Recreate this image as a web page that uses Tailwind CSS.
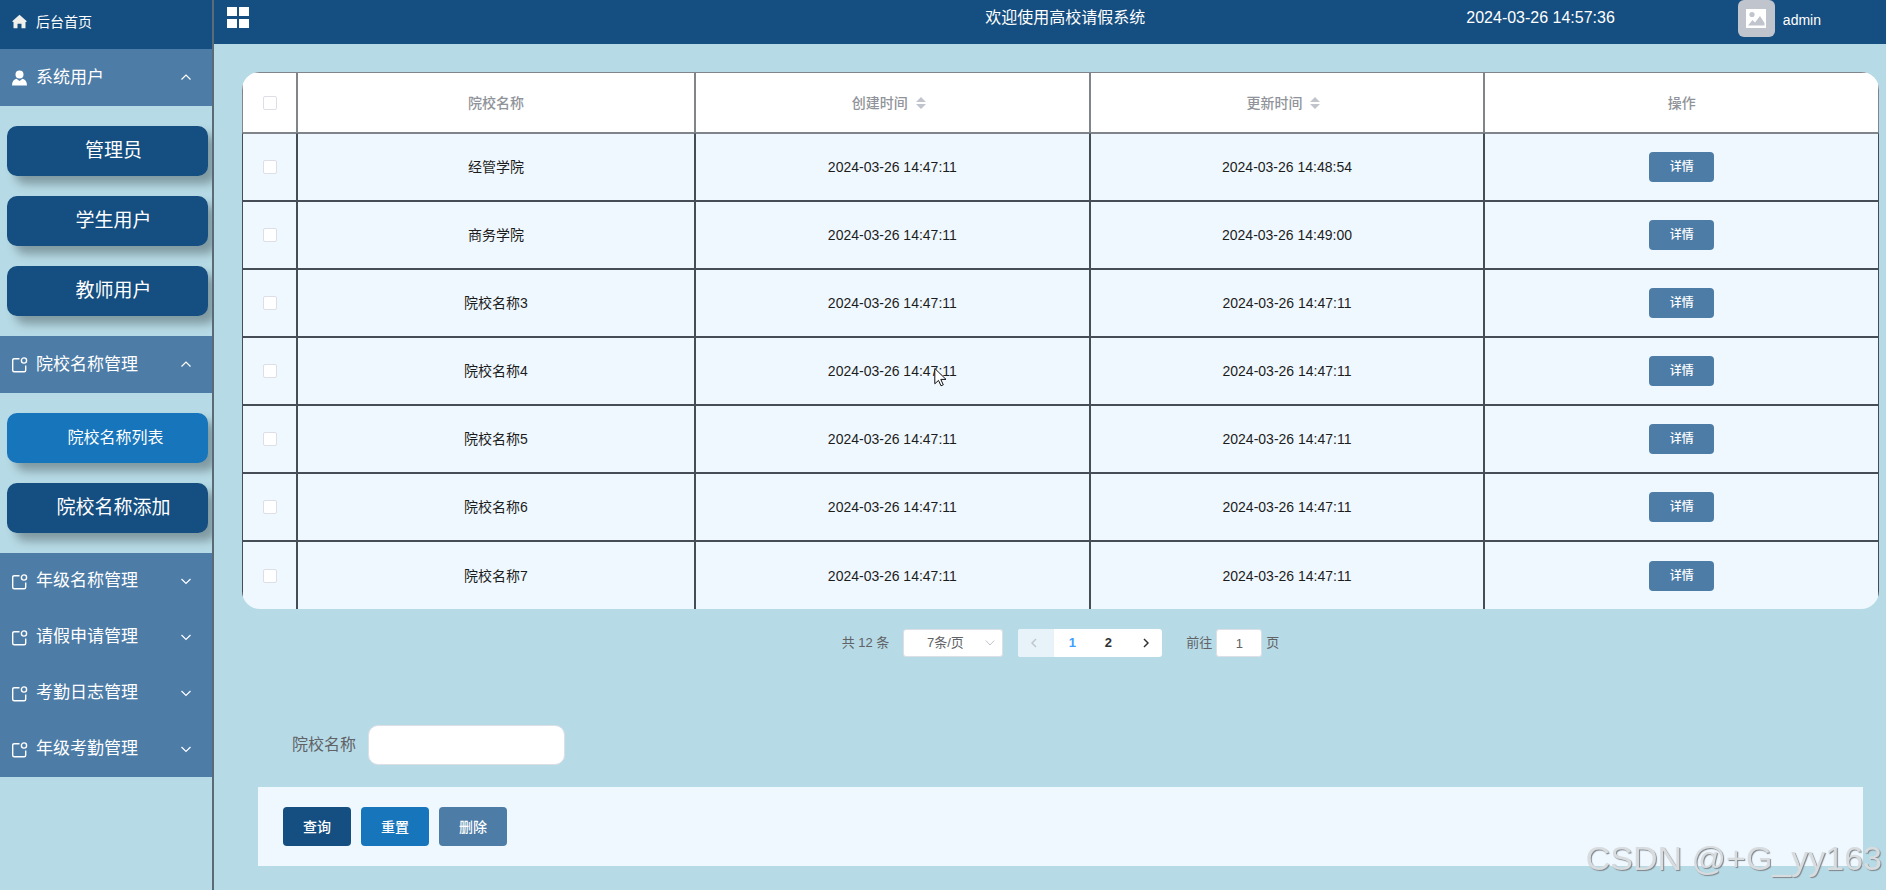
<!DOCTYPE html>
<html lang="zh-CN">
<head>
  <meta charset="UTF-8">
  <meta name="viewport" content="width=device-width, initial-scale=1.0">
  <title>高校请假系统</title>
  <script src="https://cdn.jsdelivr.net/npm/@tailwindcss/browser@4"></script>
</head>
<body class="bg-[#b7dbe6] font-['Liberation_Sans','Noto_Sans_CJK_SC',sans-serif] text-sm text-[#606266]">
  <div class="flex min-h-screen">

    <!-- 左侧菜单 -->
    <aside class="w-[214px] shrink-0 overflow-hidden border-r-2 border-[#5b6b76] text-white">
      <a href="#" class="flex h-[49px] items-center gap-2 bg-[#154e80] pl-3 pb-[6px]">
        <svg class="size-4 fill-[#f2f0ea]" viewBox="0 0 16 16"><path d="M7.500 .8 14.500 7v1h-1v6.200H9.500v-4.400h-4v4.400h-4V8h-1V7z"/></svg>
        <span>后台首页</span>
      </a>
      <nav id="menu"></nav>
    </aside>

    <div class="flex min-w-0 flex-1 flex-col">
      <!-- 顶部栏 -->
      <header class="flex h-[44px] shrink-0 items-center bg-[#154e80] pr-[65px] pb-2 pl-[13px] text-white">
        <button type="button" aria-label="折叠菜单">
          <svg class="size-[22px] fill-white" viewBox="0 0 22 22"><path d="M0 0h10v9H0zM12 0h10v9H12zM0 12h10v9H0zM12 12h10v9H12z"/></svg>
        </button>
        <h1 class="ml-auto text-base">欢迎使用高校请假系统</h1>
        <time class="ml-[321px] text-base">2024-03-26 14:57:36</time>
        <div class="ml-[123px] flex items-center gap-2">
          <span class="flex size-[37px] items-center justify-center rounded-md bg-[#c0c4cc]">
            <svg class="h-[19px] w-5" viewBox="0 0 20 19"><path fill="#fff" d="M0 0h20v19H0z"/><circle cx="6" cy="5.500" r="2.600" fill="#c0c4cc"/><path fill="#c0c4cc" d="M2 16.500 6.500 11l2.500 2.500L14 7l4.500 7v2.500z"/></svg>
          </span>
          <span class="pt-1">admin</span>
        </div>
      </header>

      <main class="pt-7 pr-[7px] pb-6 pl-7">
        <div class="overflow-hidden rounded-[18px] bg-[#f0f8ff]">
          <table class="w-full table-fixed border-separate border-spacing-0 text-center">
            <thead class="bg-white text-[#909399]">
              <tr class="h-[61px]">
                <th class="w-[55px] border border-[#80858c]"><input type="checkbox" aria-label="全选" class="block mx-auto size-[14px] appearance-none rounded-[2px] border border-[#dcdfe6] bg-white"></th>
                <th class="w-[398px] border border-[#80858c] font-medium">院校名称</th>
                <th class="border border-[#80858c] font-medium">
                  <div class="flex items-center justify-center gap-2 pr-[7px]">创建时间
                    <svg class="h-3 w-[10px] fill-[#c0c4cc]" viewBox="0 0 10 12"><path d="M5 0l5 5H0zM0 7h10l-5 5z"/></svg>
                  </div>
                </th>
                <th class="border border-[#80858c] font-medium">
                  <div class="flex items-center justify-center gap-2 pr-[7px]">更新时间
                    <svg class="h-3 w-[10px] fill-[#c0c4cc]" viewBox="0 0 10 12"><path d="M5 0l5 5H0zM0 7h10l-5 5z"/></svg>
                  </div>
                </th>
                <th class="border border-[#80858c] font-medium">操作</th>
              </tr>
            </thead>
            <tbody id="rows" class="text-[#1c1c1c]"></tbody>
          </table>
        </div>

        <!-- 分页 -->
        <div class="mt-5 flex h-7 items-center justify-center text-[13px]">
          <span>共 12 条</span>
          <div class="relative ml-[14px]">
            <select aria-label="每页条数" class="block h-7 w-[100px] appearance-none rounded-[3px] border border-[#dcdfe6] bg-white pr-6 pl-2 text-center">
              <option>7条/页</option>
            </select>
            <svg class="pointer-events-none absolute top-[10px] right-2 h-2 w-[10px]" viewBox="0 0 10 8" fill="none" stroke="#c0c4cc"><path d="M.8 1.500 5 6l4.200-4.500"/></svg>
          </div>
          <div class="ml-[15px] flex h-7 items-center overflow-hidden rounded-[3px] bg-white font-bold text-[#303133]">
            <button type="button" aria-label="上一页" class="flex h-7 w-9 items-center justify-center bg-[#e7f3f8] pr-1" disabled>
              <svg class="h-[10px] w-[6px]" viewBox="0 0 6 10" fill="none" stroke="#c0c4cc" stroke-width="1.500"><path d="M5 1 1 5l4 4"/></svg>
            </button>
            <button type="button" class="h-7 w-9 text-[#409eff]">1</button>
            <button type="button" class="h-7 w-9">2</button>
            <button type="button" aria-label="下一页" class="flex h-7 w-9 items-center justify-center pl-1">
              <svg class="h-[10px] w-[6px]" viewBox="0 0 6 10" fill="none" stroke="#303133" stroke-width="1.500"><path d="M1 1l4 4-4 4"/></svg>
            </button>
          </div>
          <label for="page" class="ml-6">前往</label>
          <input id="page" type="text" value="1" class="mx-1 h-7 w-[46px] rounded-[3px] border border-[#dcdfe6] bg-white text-center">
          <span>页</span>
        </div>

        <!-- 查询 -->
        <form class="mt-[68px] mr-4 ml-4">
          <div class="flex items-center gap-3 pl-[34px] text-base">
            <label for="college">院校名称</label>
            <input id="college" type="text" class="h-10 w-[197px] rounded-[10px] border border-[#dcdfe6] bg-white px-3">
          </div>
          <div class="mt-[22px] flex h-[79px] items-center gap-[10px] bg-[#f0f8ff] px-[25px] text-white">
            <button type="button" class="h-[39px] w-[68px] rounded bg-[#154e80] font-medium">查询</button>
            <button type="button" class="h-[39px] w-[68px] rounded bg-[#1775bb] font-medium">重置</button>
            <button type="button" class="h-[39px] w-[68px] rounded bg-[#4d7ca6] font-medium">删除</button>
          </div>
        </form>
      </main>
    </div>
  </div>

  <svg class="pointer-events-none absolute top-[367px] left-[934px] h-5 w-[13px]" viewBox="0 0 13 20" fill="#fff" stroke="#111"><path d="M.8 1.500v15.300l3.700-3.400 2.500 5.400 2.300-1-2.500-5.400h5.200z"/></svg>
  <div class="pointer-events-none fixed right-1 bottom-2 text-[34px] leading-[48px] text-[#d9dcde] [text-shadow:1px_1px_1px_#7d858b]">CSDN @+G_yy163</div>

  <script>
    const userIcon = `<svg class="size-4 fill-white" viewBox="0 0 16 16"><circle cx="7.500" cy="4.500" r="4"/><path d="M0 15.500c0-4 2-6.200 4.500-6.700l3 2.200 3-2.200c2.500.5 4.500 2.700 4.500 6.700z"/></svg>`;
    const pageIcon = `<svg class="size-4" viewBox="0 0 16 16" fill="none" stroke="#fff" stroke-width="1.400"><path d="M7.500 1.700H2.200Q.7 1.700.7 3.200v10Q.7 14.700 2.200 14.700h10q1.500 0 1.500-1.500V8.500"/><circle cx="12" cy="3.500" r="2.600"/></svg>`;
    const up = `<svg class="h-2 w-[10px]" viewBox="0 0 10 8" fill="none" stroke="#fff" stroke-width="1.200"><path d="M.5 5.500 5 1l4.500 4.500"/></svg>`;
    const down = `<svg class="h-2 w-[10px]" viewBox="0 0 10 8" fill="none" stroke="#fff" stroke-width="1.200"><path d="M.5 1 5 5.500 9.500 1"/></svg>`;

    const menu = [
      { name: "系统用户", icon: userIcon, items: ["管理员", "学生用户", "教师用户"] },
      { name: "院校名称管理", icon: pageIcon, items: ["院校名称列表", "院校名称添加"] },
      { name: "年级名称管理", icon: pageIcon },
      { name: "请假申请管理", icon: pageIcon },
      { name: "考勤日志管理", icon: pageIcon },
      { name: "年级考勤管理", icon: pageIcon }
    ];
    const active = "院校名称列表";

    document.getElementById("menu").innerHTML = menu.map(group => `
      <button type="button" class="flex ${group.items ? "h-[57px]" : "h-[56px]"} w-full items-center gap-2 bg-[#4d7ca6] pt-px pr-[21px] pl-3 text-[17px]">
        ${group.icon}<span class="flex-1 text-left">${group.name}</span>${group.items ? up : down}
      </button>
      ${group.items ? `<div class="flex flex-col gap-5 py-5 pr-1 pl-[7px]">${group.items.map(item => `
        <a href="#" class="flex h-[50px] items-center justify-center rounded-[10px] shadow-[8px_8px_10px_rgba(0,0,0,0.3)] ${item === active ? "bg-[#1775bb] pl-4 text-base" : "bg-[#154e80] pl-3 text-[19px]"}">${item}</a>`).join("")}
      </div>` : ""}
    `).join("");

    const rows = [
      ["经管学院", "2024-03-26 14:47:11", "2024-03-26 14:48:54"],
      ["商务学院", "2024-03-26 14:47:11", "2024-03-26 14:49:00"],
      ["院校名称3", "2024-03-26 14:47:11", "2024-03-26 14:47:11"],
      ["院校名称4", "2024-03-26 14:47:11", "2024-03-26 14:47:11"],
      ["院校名称5", "2024-03-26 14:47:11", "2024-03-26 14:47:11"],
      ["院校名称6", "2024-03-26 14:47:11", "2024-03-26 14:47:11"],
      ["院校名称7", "2024-03-26 14:47:11", "2024-03-26 14:47:11"]
    ];

    document.getElementById("rows").innerHTML = rows.map(row => `
      <tr class="group h-[68px]">
        <td class="border border-[#474d57] group-first:border-t-[#80858c] group-last:border-b-0"><input type="checkbox" aria-label="${row[0]}" class="block mx-auto size-[14px] appearance-none rounded-[2px] border border-[#dcdfe6] bg-white"></td>
        ${row.map(text => `<td class="border border-[#474d57] group-first:border-t-[#80858c] group-last:border-b-0">${text}</td>`).join("")}
        <td class="border border-[#474d57] group-first:border-t-[#80858c] group-last:border-b-0"><button type="button" class="h-[30px] w-[65px] rounded bg-[#4d7ca6] text-xs font-medium text-white">详情</button></td>
      </tr>
    `).join("");
  </script>
</body>
</html>
